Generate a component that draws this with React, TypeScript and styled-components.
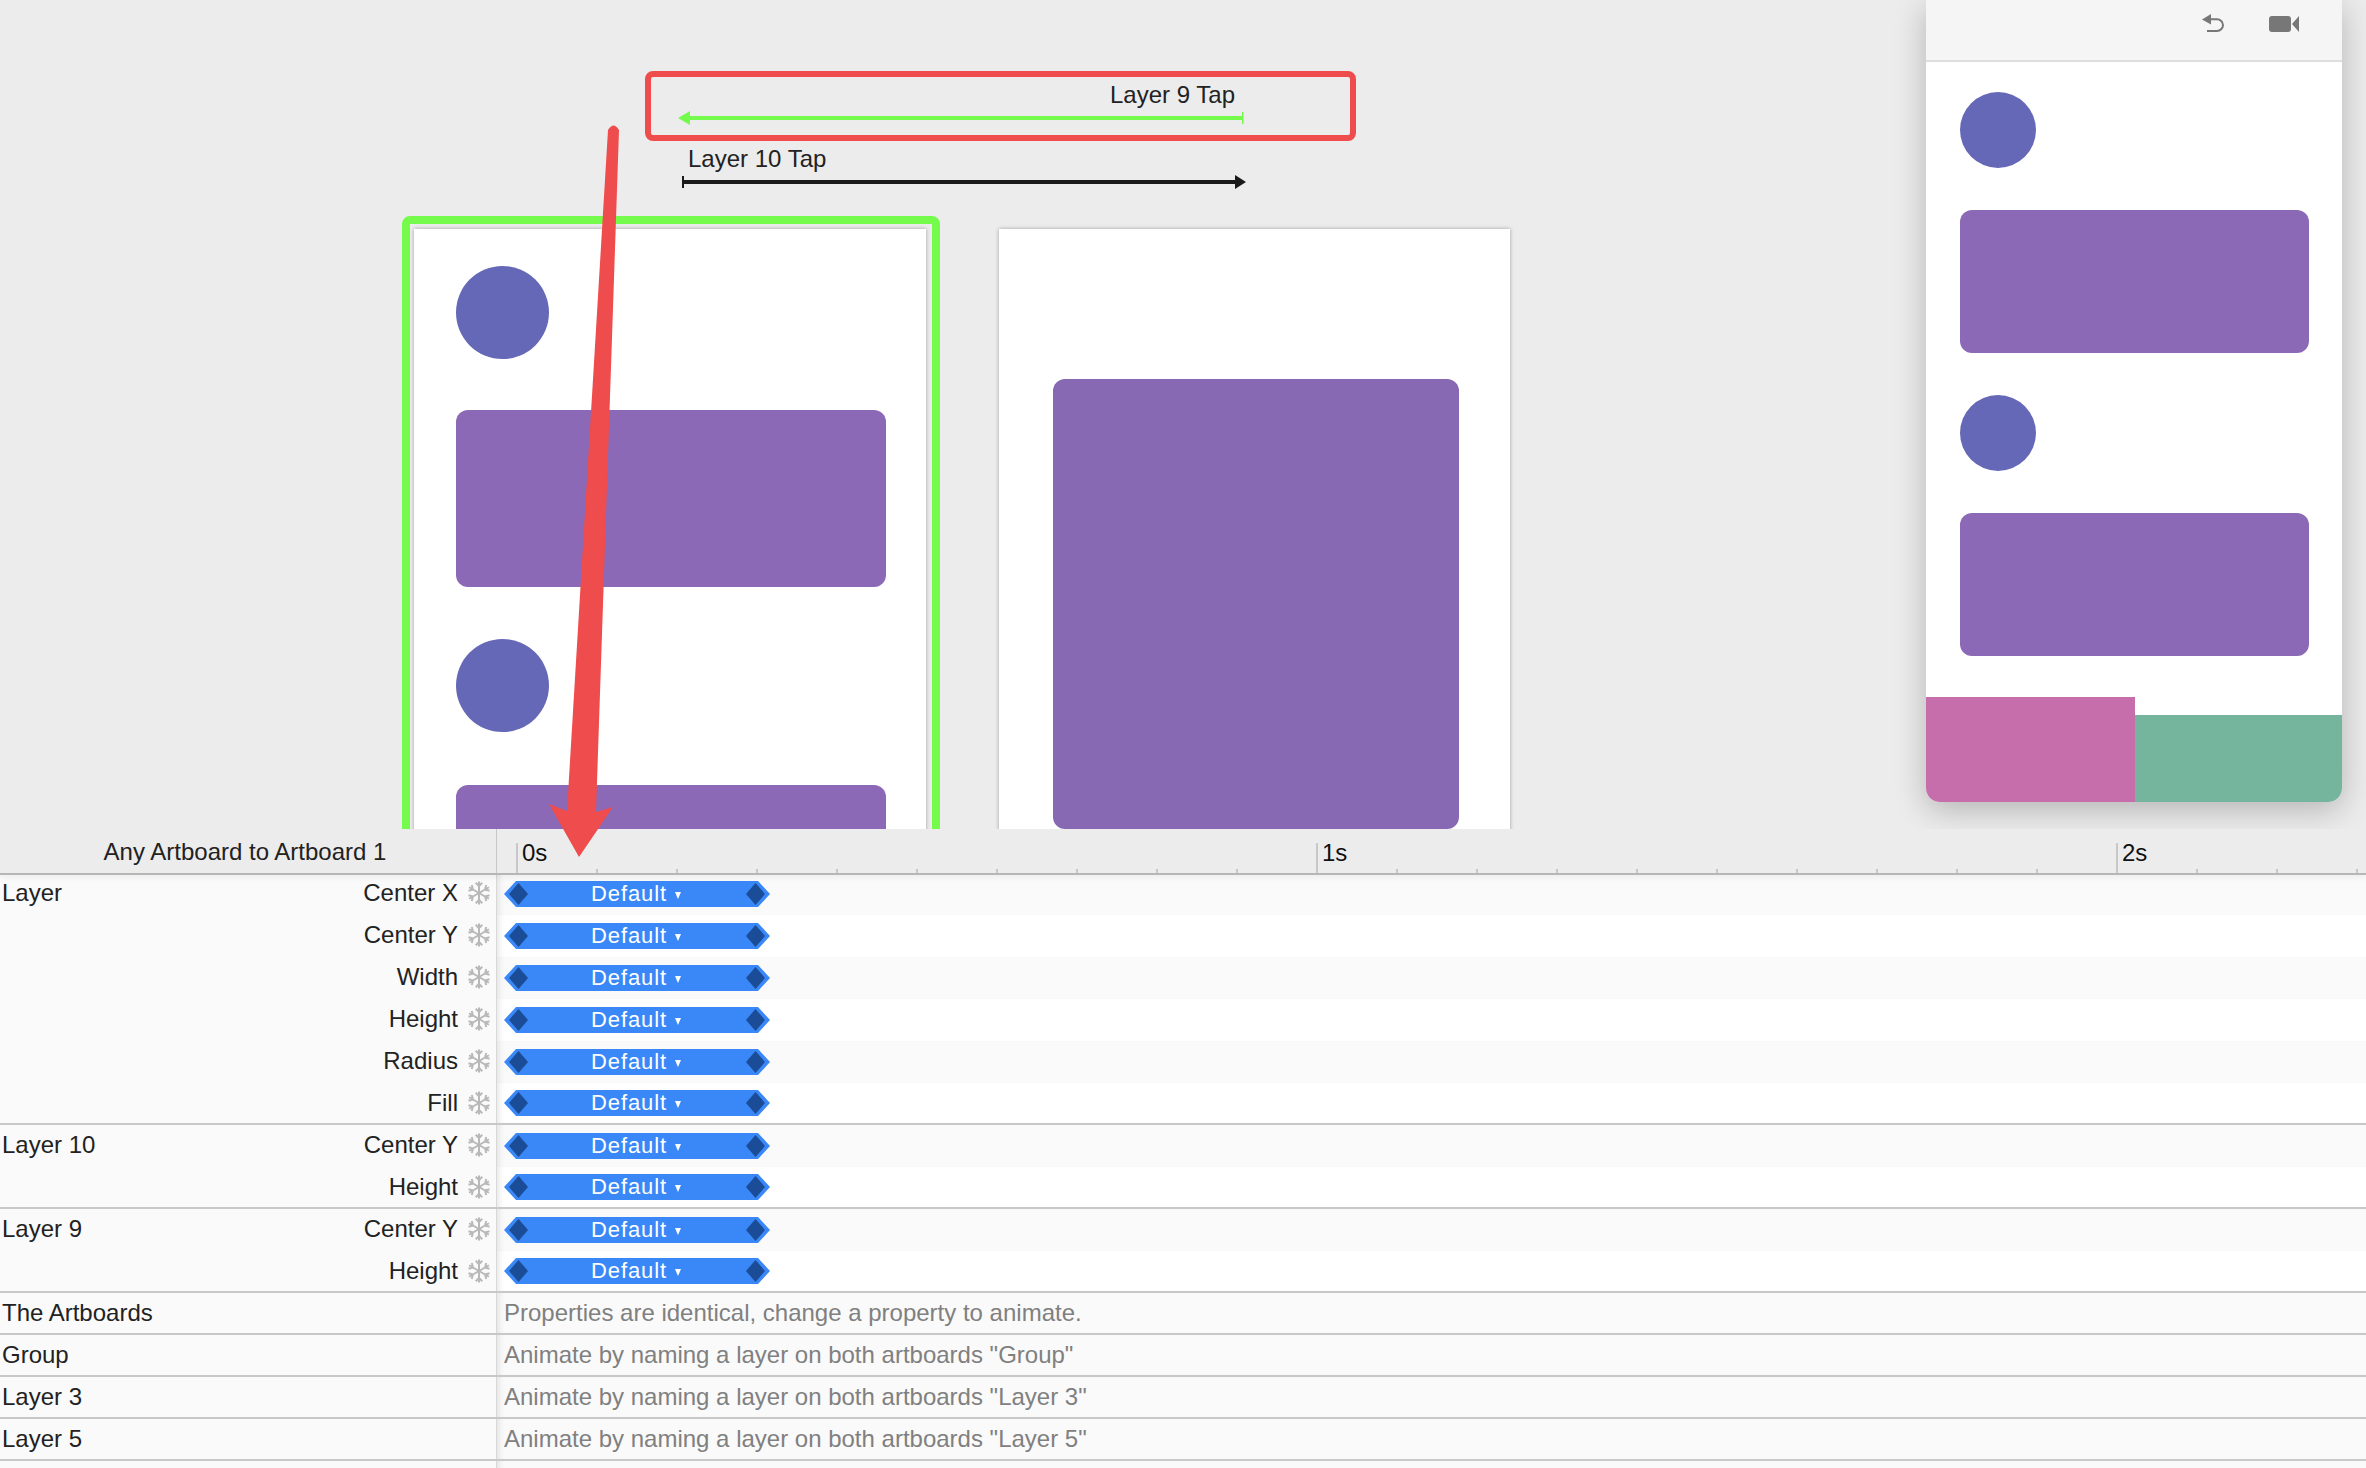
import React, { FC } from 'react'
import styled, { createGlobalStyle } from 'styled-components'

const STYLE_CANVAS_BG = '#ececec'
const STYLE_RED = '#ef4c4d'
const STYLE_GREEN = '#75fb4c'
const STYLE_CIRCLE = '#6568b6'
const STYLE_RECT = '#8b69b6'
const STYLE_LINE = '#c8c8c8'
const PX_PER_TICK = 80

const GlobalStyle = createGlobalStyle`
  html, body {
    margin: 0;
    background: #fafafa;
    overflow: hidden;
  }
  * {
    box-sizing: border-box;
  }
`

const Page = styled.div`
  position: relative;
  display: flex;
  flex-direction: column;
  width: 2366px;
  height: 1468px;
  overflow: hidden;
  font-family: "Liberation Sans", Arial, sans-serif;
  font-size: 24px;
  color: #222;
`

/* free canvas: artboards and annotations sit at their own spot */
const Canvas = styled.div`
  position: relative;
  flex: none;
  height: 829px;
  background: ${STYLE_CANVAS_BG};
  overflow: hidden;
`
const SelectionFrame = styled.div`
  position: absolute;
  left: 402px;
  top: 216px;
  width: 538px;
  height: 700px;
  border: 8px solid ${STYLE_GREEN};
  border-radius: 8px;
`
const Artboard = styled.div<{ $left: number; $width: number; $padLeft: number; $padTop: number }>`
  position: absolute;
  left: ${p => p.$left}px;
  top: 229px;
  width: ${p => p.$width}px;
  height: 700px;
  display: flex;
  flex-direction: column;
  align-items: flex-start;
  padding: ${p => p.$padTop}px 0 0 ${p => p.$padLeft}px;
  background: #fff;
  box-shadow: 0 0 4px rgba(0, 0, 0, 0.32);
`
const Circle = styled.div<{ $size: number; $after: number }>`
  flex: none;
  width: ${p => p.$size}px;
  height: ${p => p.$size}px;
  margin-bottom: ${p => p.$after}px;
  border-radius: 50%;
  background: ${STYLE_CIRCLE};
`
const Block = styled.div<{ $w: number; $h: number; $after?: number; $color?: string }>`
  flex: none;
  width: ${p => p.$w}px;
  height: ${p => p.$h}px;
  margin-bottom: ${p => p.$after || 0}px;
  border-radius: 12px;
  background: ${p => p.$color || STYLE_RECT};
`
const TapBox = styled.div`
  position: absolute;
  left: 645px;
  top: 71px;
  width: 711px;
  height: 70px;
  border: 6px solid ${STYLE_RED};
  border-radius: 8px;
`
const Caption = styled.div<{ $left: number; $top: number }>`
  position: absolute;
  left: ${p => p.$left}px;
  top: ${p => p.$top}px;
  line-height: 28px;
  white-space: nowrap;
`
const TrackSvg = styled.svg<{ $left: number; $top: number }>`
  position: absolute;
  left: ${p => p.$left}px;
  top: ${p => p.$top}px;
`

const Preview = styled.div`
  position: absolute;
  left: 1926px;
  top: 0;
  width: 416px;
  height: 802px;
  display: flex;
  flex-direction: column;
  background: #fff;
  border-radius: 0 0 14px 14px;
  box-shadow: 0 8px 32px rgba(0, 0, 0, 0.24);
  overflow: hidden;
`
const PreviewBar = styled.div`
  flex: none;
  display: flex;
  justify-content: flex-end;
  align-items: flex-start;
  gap: 44px;
  height: 62px;
  padding: 12px 43px 0 0;
  background: #f5f5f5;
  border-bottom: 2px solid #dedede;
`
const PreviewBody = styled.div`
  flex: 1;
  display: flex;
  flex-direction: column;
  align-items: flex-start;
  padding: 30px 0 0 34px;
`
const PreviewFooter = styled.div`
  flex: none;
  display: flex;
  align-items: flex-end;
  height: 105px;
`
const FooterPink = styled.div`
  width: 209px;
  height: 105px;
  background: #c66dab;
`
const FooterGreen = styled.div`
  flex: 1;
  height: 87px;
  background: #75b59d;
`

const Ruler = styled.div`
  position: relative;
  z-index: 2;
  flex: none;
  display: flex;
  height: 44px;
  background: ${STYLE_CANVAS_BG};
  box-shadow: 0 2px 0 #b6b6b6, 0 5px 6px rgba(0, 0, 0, 0.05);
`
const RulerTitle = styled.div`
  flex: none;
  display: flex;
  align-items: center;
  justify-content: center;
  width: 497px;
  padding: 2px 6px 0 0;
  border-right: 1px solid ${STYLE_LINE};
`
const Ticks = styled.div`
  display: flex;
  align-items: flex-end;
  padding-left: 19px;
  overflow: hidden;
`
const Tick = styled.div<{ $major: boolean }>`
  position: relative;
  flex: none;
  width: ${PX_PER_TICK}px;
  height: ${p => (p.$major ? 30 : 4)}px;
  border-left: 2px solid ${STYLE_LINE};
`
const TickLabel = styled.span`
  position: absolute;
  left: 4px;
  top: -4px;
  line-height: 28px;
  color: #111;
`

const Row = styled.div<{ $last: boolean }>`
  flex: none;
  display: flex;
  height: 42px;
  ${p => p.$last && `border-bottom: 2px solid ${STYLE_LINE};`}
`
const NameCell = styled.div<{ $raise?: boolean }>`
  flex: none;
  display: flex;
  align-items: center;
  width: 497px;
  padding: 0 5px ${p => (p.$raise ? 2 : 0)}px 2px;
  background: #fafafa;
  border-right: 1px solid #d8d8d8;
`
const LayerName = styled.span`
  flex: 1;
`
const PropName = styled.span`
  margin-right: 9px;
`
const TrackCell = styled.div<{ $alt: boolean }>`
  flex: 1;
  display: flex;
  align-items: center;
  padding-left: 7px;
  background: ${p => (p.$alt ? '#fff' : '#fafafa')};
  box-shadow: inset 7px 0 6px -5px rgba(0, 0, 0, 0.1);
`
const Hint = styled.span`
  color: #808080;
`
const Bar = styled.div`
  display: flex;
  align-items: center;
  justify-content: space-between;
  width: 266px;
  height: 26px;
  padding: 0 5px;
  background: #3a88f7;
  clip-path: polygon(12px 0, calc(100% - 12px) 0, 100% 50%, calc(100% - 12px) 100%, 12px 100%, 0 50%);
`
const Diamond = styled.div`
  width: 19px;
  height: 22px;
  background: #1a4c97;
  clip-path: polygon(50% 0, 100% 50%, 50% 100%, 0 50%);
`
const BarLabel = styled.div`
  display: flex;
  align-items: center;
  gap: 8px;
  margin-right: 2px;
  font-size: 22px;
  letter-spacing: 0.9px;
  color: #fff;
`
const Caret = styled.i`
  width: 0;
  height: 0;
  margin-top: 3px;
  border-left: 3.5px solid transparent;
  border-right: 3.5px solid transparent;
  border-top: 7px solid #fff;
`
const PointerSvg = styled.svg`
  position: absolute;
  z-index: 5;
  left: 540px;
  top: 115px;
`

const Snowflake: FC = () => (
  <svg width="24" height="24" viewBox="0 0 22 22" fill="none" stroke="#b8b8b8" strokeWidth="1.8">
    {[0, 60, 120, 180, 240, 300].map(angle => (
      <g key={angle} transform={`rotate(${angle} 11 11)`}>
        <path d="M11 11V0.5M8 1.6L11 4.6L14 1.6" />
      </g>
    ))}
  </svg>
)

const UndoIcon: FC = () => (
  <svg width="24" height="22" viewBox="0 0 24 22" fill="none">
    <path d="M1 7.5L10 2V12.5Z" fill="#777" />
    <path d="M8 7.3H16A6 6 0 0 1 22 13.2A6 6 0 0 1 16 19H6" stroke="#777" strokeWidth="2" />
  </svg>
)

const VideoIcon: FC = () => (
  <svg width="30" height="22" viewBox="0 0 30 22" fill="#777">
    <rect x="0" y="4" width="22" height="16" rx="3" />
    <path d="M23 12L30 4V20Z" />
  </svg>
)

interface TrackRow {
  layer?: string;
  prop: string;
}
const GROUPS: TrackRow[][] = [
  [
    { layer: 'Layer', prop: 'Center X' },
    { prop: 'Center Y' },
    { prop: 'Width' },
    { prop: 'Height' },
    { prop: 'Radius' },
    { prop: 'Fill' },
  ],
  [{ layer: 'Layer 10', prop: 'Center Y' }, { prop: 'Height' }],
  [{ layer: 'Layer 9', prop: 'Center Y' }, { prop: 'Height' }],
]
const HINTS = [
  { layer: 'The Artboards', text: 'Properties are identical, change a property to animate.' },
  { layer: 'Group', text: 'Animate by naming a layer on both artboards "Group"' },
  { layer: 'Layer 3', text: 'Animate by naming a layer on both artboards "Layer 3"' },
  { layer: 'Layer 5', text: 'Animate by naming a layer on both artboards "Layer 5"' },
]
const TICK_COUNT = 24

const App: FC = () => (
  <Page>
    <GlobalStyle />
    <Canvas>
      <SelectionFrame />
      <Artboard $left={414} $width={512} $padLeft={42} $padTop={37}>
        <Circle $size={93} $after={51} />
        <Block $w={430} $h={177} $after={52} />
        <Circle $size={93} $after={53} />
        <Block $w={430} $h={177} />
      </Artboard>
      <Artboard $left={999} $width={511} $padLeft={54} $padTop={150}>
        <Block $w={406} $h={450} $color="#8669b2" />
      </Artboard>

      <TapBox />
      <Caption $left={1110} $top={81}>Layer 9 Tap</Caption>
      <TrackSvg $left={676} $top={108} width="570" height="20">
        <path d="M2 10L14 3V8H566V12H14V17Z" fill={STYLE_GREEN} />
        <rect x="566" y="4" width="1.5" height="12" fill={STYLE_GREEN} />
      </TrackSvg>
      <Caption $left={688} $top={145}>Layer 10 Tap</Caption>
      <TrackSvg $left={680} $top={172} width="570" height="20">
        <path d="M2 4H4V8H555V3L566 10L555 17V12H4V16H2Z" fill="#1a1a1a" />
      </TrackSvg>

      <Preview>
        <PreviewBar>
          <UndoIcon />
          <VideoIcon />
        </PreviewBar>
        <PreviewBody>
          <Circle $size={76} $after={42} />
          <Block $w={349} $h={143} $after={42} />
          <Circle $size={76} $after={42} />
          <Block $w={349} $h={143} />
        </PreviewBody>
        <PreviewFooter>
          <FooterPink />
          <FooterGreen />
        </PreviewFooter>
      </Preview>
    </Canvas>

    <Ruler>
      <RulerTitle>Any Artboard to Artboard 1</RulerTitle>
      <Ticks>
        {Array.from({ length: TICK_COUNT }, (_, i) => (
          <Tick key={i} $major={i % 10 === 0}>
            {i % 10 === 0 && <TickLabel>{i / 10}s</TickLabel>}
          </Tick>
        ))}
      </Ticks>
    </Ruler>

    {GROUPS.map((rows, groupIndex) => (
      <div key={groupIndex}>
        {rows.map((row, i) => (
          <Row key={row.prop} $last={i === rows.length - 1}>
            <NameCell $raise={i !== rows.length - 1}>
              <LayerName>{row.layer}</LayerName>
              <PropName>{row.prop}</PropName>
              <Snowflake />
            </NameCell>
            <TrackCell $alt={i % 2 === 1}>
              <Bar>
                <Diamond />
                <BarLabel>Default<Caret /></BarLabel>
                <Diamond />
              </Bar>
            </TrackCell>
          </Row>
        ))}
      </div>
    ))}
    {HINTS.map(hint => (
      <Row key={hint.layer} $last>
        <NameCell>
          <LayerName>{hint.layer}</LayerName>
        </NameCell>
        <TrackCell $alt={false}>
          <Hint>{hint.text}</Hint>
        </TrackCell>
      </Row>
    ))}
    <Row $last={false}>
      <NameCell />
      <TrackCell $alt={false} />
    </Row>

    <PointerSvg width="90" height="750" viewBox="0 0 90 750">
      <path d="M68 15Q73.500 6 79 15L56 697L73 692L39 742L9 689L27 696Z" fill={STYLE_RED} />
    </PointerSvg>
  </Page>
)

export default App
